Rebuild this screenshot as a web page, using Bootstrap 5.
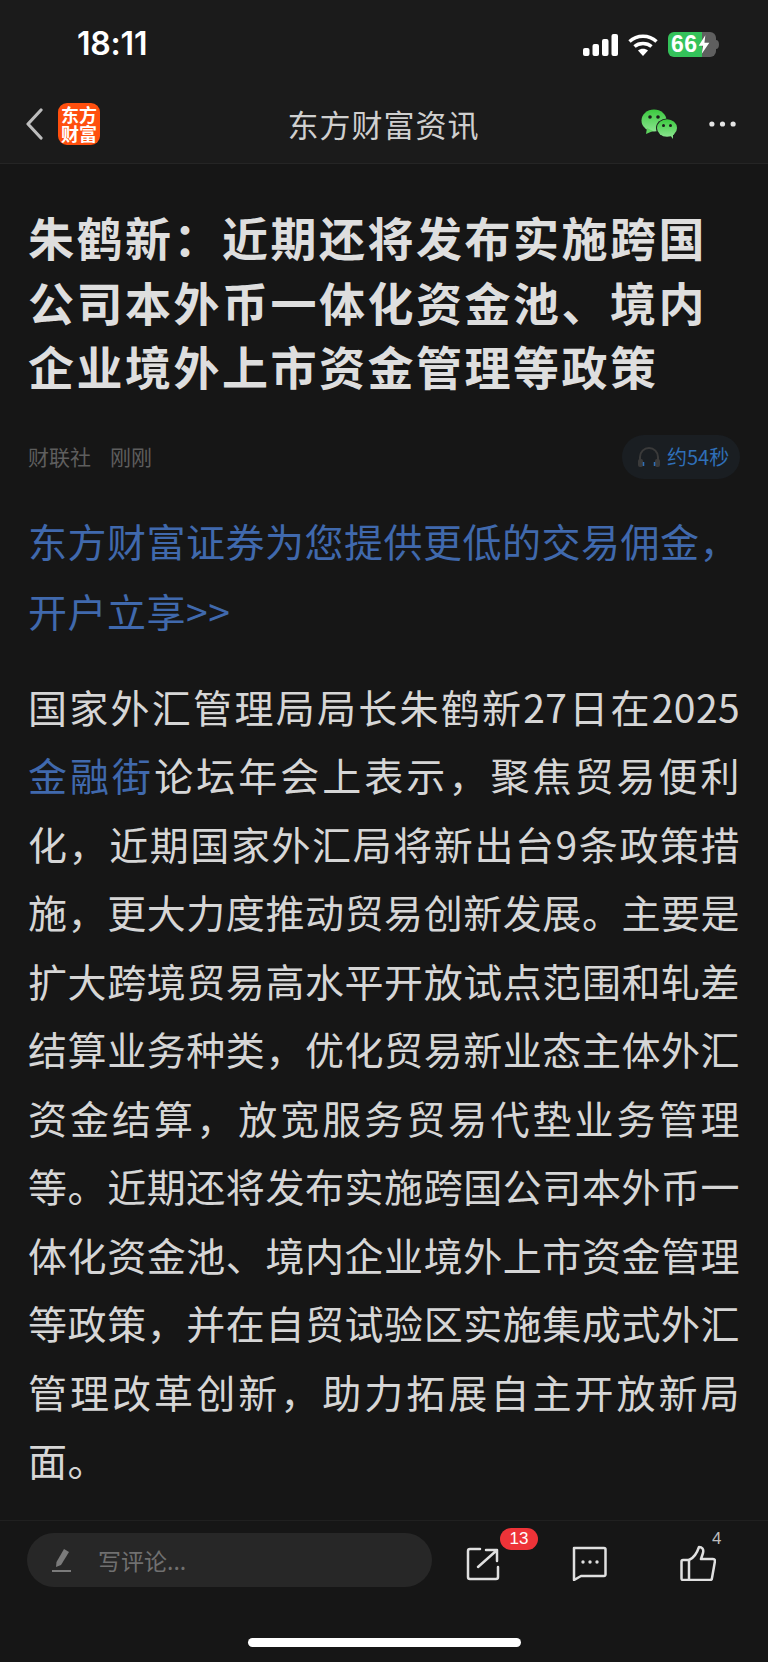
<!DOCTYPE html>
<html lang="zh-CN">
<head>
  <meta charset="UTF-8">
  <title>东方财富资讯</title>
  <link href="https://cdn.jsdelivr.net/npm/bootstrap@5.3.3/dist/css/bootstrap.min.css" rel="stylesheet">
  <style>
    html,body{height:100%;}
    body{background:#161616;font-family:"Liberation Sans","Noto Sans CJK SC",sans-serif;color:#e4e4e4;}
    .phone{position:relative;width:768px;height:1662px;overflow:hidden;}
    .topbar{background:#1b1b1b;height:164px;border-bottom:1px solid #252525;}
    .statusrow{height:86px;padding:0 0 0 77px;}
    .clock{font:600 32px/1 Inter,"Liberation Sans",sans-serif;color:#fff;margin-top:1px;letter-spacing:-.2px;}
    .sysicons{margin-left:auto;margin-right:49px;margin-top:3px;gap:9px;}
    .batt{width:48px;height:25px;background:linear-gradient(90deg,#34c25a 70%,#5f5f5f 70%);border-radius:6px;font:700 23px/25px "Liberation Sans",sans-serif;color:#fff;padding-left:3px;letter-spacing:.5px;}
    .batt svg{margin-left:-2px;flex:none;}
    .navrow{height:76px;padding:0 32px 0 25px;}
    .applogo{width:42px;height:42px;background:#ff4f0e;border-radius:9px;color:#fff;font:700 18px/18.500px "Noto Sans CJK SC",sans-serif;text-align:center;padding-top:2px;margin-left:13px;}
    .navtitle{position:absolute;left:238px;width:291px;font:400 31px/1 "Noto Sans CJK SC",sans-serif;color:#cfcfcf;letter-spacing:1px;text-align:center;margin-top:-2px;}
    .navright{margin-left:auto;gap:30px;}
    .article{padding:0 28px;}
    .headline{font:700 46px/64.5px "Noto Sans CJK SC",sans-serif;color:#dedede;margin:40px 0 0;letter-spacing:2.500px;white-space:nowrap;}
    .meta{margin-top:36px;height:46px;font:400 21px/1 "Noto Sans CJK SC",sans-serif;color:#5e5e5e;}
    .meta span+span{margin-left:19px;}
    .listen{margin-left:auto;height:44px;width:118px;border-radius:22px;background:#1a1e22;color:#2f6fb8;font-size:20px;gap:6px;padding-left:15px;}
    .promo{margin-top:25px;font:400 39px/70.500px "Noto Sans CJK SC",sans-serif;color:#4069ad;letter-spacing:.5px;white-space:nowrap;}
    .bodytext{margin-top:26px;font:400 39px/68.500px "Noto Sans CJK SC",sans-serif;color:#d6d6d6;text-align:justify;letter-spacing:.4px;}
    .bodytext a{color:#4069ad;text-decoration:none;}
    .footbar{position:absolute;left:0;right:0;bottom:0;height:142px;border-top:1px solid #202020;background:#161616;}
    .inputfake{width:405px;height:54px;margin:12px 0 0 27px;background:#272727;border-radius:27px;color:#707070;font:400 23px/1 "Noto Sans CJK SC",sans-serif;padding-left:24px;gap:25px;}
    .tool{margin-top:24px;}
    .sharebox{margin-left:34px;}
    .cnt{position:absolute;left:500px;top:7px;width:38px;height:22px;padding:0;border-radius:11px;background:#ee3338;font:400 17px/22px "Liberation Sans",sans-serif;color:#fff;}
    .gapmid{margin-left:69px;}
    .gapthumb{margin-left:73px;}
    .num4{position:absolute;left:712px;top:9px;font:400 17px/1 "Liberation Sans",sans-serif;color:#bdbdbd;}
    .homebar{position:absolute;left:248px;top:1638px;width:273px;height:9px;border-radius:5px;background:#fff;}
  </style>
</head>
<body>
<div class="phone">
  <div class="topbar">
    <div class="statusrow d-flex align-items-center">
      <div class="clock">18:11</div>
      <div class="sysicons d-flex align-items-center">
        <svg width="35" height="24" viewBox="0 0 35 24" fill="#fff"><rect x="0" y="15" width="6.500" height="8" rx="2"/><rect x="9.500" y="11" width="6.500" height="12" rx="2"/><rect x="19" y="6" width="6.500" height="17" rx="2"/><rect x="28.500" y="1" width="6.500" height="22" rx="2"/></svg>
        <svg width="32" height="24" viewBox="0 0 31 24" fill="none" stroke="#fff" stroke-width="3.400"><path d="M2 8.500C9.500 1.500 21.500 1.500 29 8.500"/><path d="M7 13.500C11.500 9.500 19.500 9.500 24 13.500"/><path d="M15.500 23l-5-5.500c2.800-2.400 7.200-2.400 10 0z" fill="#fff" stroke="none"/></svg>
        <div class="d-flex align-items-center">
          <div class="batt d-flex">66<svg width="16" height="25" viewBox="0 0 18 25" fill="#fff"><path d="M10.500 2L3 14h5l-1.500 9L15 10.500H9.500z"/></svg></div>
          <svg width="3" height="9" viewBox="0 0 3 9" fill="#5f5f5f"><path d="M0 0c2 0 3 2 3 4.500S2 9 0 9z"/></svg>
        </div>
      </div>
    </div>
    <div class="navrow d-flex align-items-center">
      <svg width="20" height="32" viewBox="0 0 20 32" fill="none" stroke="#bdbdbd" stroke-width="3.200" stroke-linecap="round" stroke-linejoin="round"><path d="M16 2L3 16l13 14"/></svg>
      <div class="applogo">东方<br>财富</div>
      <div class="navtitle">东方财富资讯</div>
      <div class="navright d-flex align-items-center">
        <svg width="38" height="30" viewBox="0 0 38 30">
          <defs><linearGradient id="wx" x1="0" y1="0" x2="0" y2="1"><stop offset="0" stop-color="#3bc93f"/><stop offset="1" stop-color="#8ae48e"/></linearGradient></defs>
          <ellipse cx="13" cy="11.500" rx="12.500" ry="11" fill="url(#wx)"/><path d="M6 19l-1 6 7-3z" fill="#5ed45f"/>
          <ellipse cx="26" cy="19" rx="11" ry="9.500" fill="#1b1b1b"/>
          <ellipse cx="26" cy="19" rx="10" ry="8.800" fill="url(#wx)"/><path d="M29 26l3 4 0-6z" fill="#80e084"/>
          <circle cx="9" cy="8" r="1.800" fill="#1b1b1b"/><circle cx="17" cy="8" r="1.800" fill="#1b1b1b"/>
          <circle cx="22.500" cy="16.500" r="1.500" fill="#1b1b1b"/><circle cx="29.500" cy="16.500" r="1.500" fill="#1b1b1b"/>
        </svg>
        <svg width="27" height="6" viewBox="0 0 28 6" fill="#e4e4e4"><circle cx="3" cy="3" r="2.700"/><circle cx="14" cy="3" r="2.700"/><circle cx="25" cy="3" r="2.700"/></svg>
      </div>
    </div>
  </div>

  <div class="article">
    <h1 class="headline">朱鹤新：近期还将发布实施跨国<br>公司本外币一体化资金池、境内<br>企业境外上市资金管理等政策</h1>
    <div class="meta d-flex align-items-center">
      <span>财联社</span><span>刚刚</span>
      <div class="listen d-flex align-items-center">
        <svg width="24" height="22" viewBox="0 0 24 22" fill="none"><path d="M3 15V11a9 9 0 0 1 18 0v4" stroke="#3a3a3a" stroke-width="2"/><rect x="1" y="13" width="5" height="8" rx="2" fill="#3a3a3a"/><rect x="18" y="13" width="5" height="8" rx="2" fill="#3a3a3a"/><path d="M6.500 16v4M17.500 16v4" stroke="#2f6fb8" stroke-width="1.500"/></svg>
        <span class="m-0">约54秒</span>
      </div>
    </div>
    <div class="promo">东方财富证券为您提供更低的交易佣金，<br>开户立享&gt;&gt;</div>
    <div class="bodytext">国家外汇管理局局长朱鹤新27日在2025<a href="#">金融街</a>论坛年会上表示，聚焦贸易便利化，近期国家外汇局将新出台9条政策措施，更大力度推动贸易创新发展。主要是扩大跨境贸易高水平开放试点范围和轧差结算业务种类，优化贸易新业态主体外汇资金结算，放宽服务贸易代垫业务管理等。近期还将发布实施跨国公司本外币一体化资金池、境内企业境外上市资金管理等政策，并在自贸试验区实施集成式外汇管理改革创新，助力拓展自主开放新局面。</div>
  </div>

  <div class="footbar d-flex align-items-start">
    <div class="inputfake d-flex align-items-center">
      <svg width="22" height="28" viewBox="0 0 22 28" fill="#7b7b7b"><path d="M13 3l5 3-8 13-5 2 .5-5z"/><rect x="1" y="24" width="19" height="2"/></svg>
      <span>写评论...</span>
    </div>
    <svg class="tool sharebox" width="36" height="36" viewBox="0 0 36 36" fill="none" stroke="#e0e0e0" stroke-width="2.500" stroke-linecap="round" stroke-linejoin="round"><path d="M14 4H4a2 2 0 0 0-2 2v26a2 2 0 0 0 2 2h26a2 2 0 0 0 2-2V22"/><path d="M12 22L30 6M20 5h11v11"/></svg>
    <span class="cnt badge">13</span>
    <svg class="tool gapmid" width="36" height="36" viewBox="0 0 36 36" fill="none" stroke="#e0e0e0" stroke-width="2.500" stroke-linejoin="round"><path d="M3 3h30a1.500 1.500 0 0 1 1.500 1.500v25a1.500 1.500 0 0 1-1.500 1.500H10l-7 4z"/><circle cx="12" cy="17" r="1.700" fill="#e0e0e0" stroke="none"/><circle cx="19" cy="17" r="1.700" fill="#e0e0e0" stroke="none"/><circle cx="26" cy="17" r="1.700" fill="#e0e0e0" stroke="none"/></svg>
    <svg class="tool gapthumb" width="36" height="36" viewBox="0 0 36 36" fill="none" stroke="#e0e0e0" stroke-width="2.500" stroke-linejoin="round" stroke-linecap="round"><path d="M9 15c5-2 8-7 10-13 3 0 5 2 4 6l-2 6h12a2 2 0 0 1 2 2l-3 17a2 2 0 0 1-2 2H9z"/><path d="M9 15H3a1.500 1.500 0 0 0-1.500 1.500v17A1.500 1.500 0 0 0 3 35h6"/></svg>
    <span class="num4">4</span>
  </div>
  <div class="homebar"></div>
</div>
</body>
</html>
